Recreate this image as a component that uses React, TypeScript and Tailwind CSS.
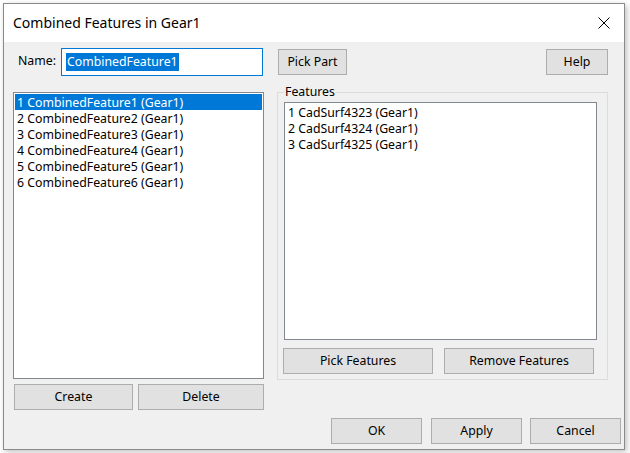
import React from 'react';

const listItems = [
  '1 CombinedFeature1 (Gear1)',
  '2 CombinedFeature2 (Gear1)',
  '3 CombinedFeature3 (Gear1)',
  '4 CombinedFeature4 (Gear1)',
  '5 CombinedFeature5 (Gear1)',
  '6 CombinedFeature6 (Gear1)',
];

const features = [
  '1 CadSurf4323 (Gear1)',
  '2 CadSurf4324 (Gear1)',
  '3 CadSurf4325 (Gear1)',
];

function WinButton({ label, className }: { label: string; className: string }) {
  return (
    <button
      type="button"
      className={ `flex items-center justify-center border border-[#adadad] bg-[#e1e1e1] text-[12.3px] text-black ${className}` }
    >
      {label}
    </button>
  );
}

export default function App() {
  return (
    <div className="min-h-screen bg-white p-[3px] font-['Noto_Sans',sans-serif] text-[12.3px] text-black">
      <div className="flex h-[447px] w-[622px] flex-col border border-[#8a8a8a] bg-[#f0f0f0] shadow-[2px_2px_6px_rgba(0,0,0,0.25)]">

        {/* title bar */}
        <div className="flex h-[38px] items-center bg-white">
          <span className="ml-[9px] text-[14px] leading-none">Combined Features in Gear1</span>
          <svg className="ml-auto mr-[14px]" width="12" height="12" viewBox="0 0 12 12">
            <path d="M0.5 0.5 L11.5 11.5 M11.5 0.5 L0.5 11.5" stroke="#000" strokeWidth="1" />
          </svg>
        </div>

        {/* name row */}
        <div className="flex items-start pt-[6px]">
          <span className="ml-[14px] mt-[5px] w-[43px] leading-[16px]">Name:</span>
          <div className="flex h-[28px] w-[202px] items-center border border-[#0078d7] bg-white pl-[4px]">
            <span className="bg-[#0078d7] px-[1px] leading-[18px] text-white">CombinedFeature1</span>
          </div>
          <WinButton label="Pick Part" className="ml-[15px] mt-[1px] h-[26px] w-[69px]" />
          <WinButton label="Help" className="ml-auto mr-[16px] mt-[1px] h-[26px] w-[62px]" />
        </div>

        {/* main area */}
        <div className="mt-[8px] flex items-start">
          <div className="ml-[9px] mt-[8px] flex w-[251px] flex-col">
            <div className="h-[287px] border border-[#828790] bg-white p-[1px]">
              {listItems.map((item, i) => (
                <div
                  key={ item }
                  className={ `h-[16px] px-[2px] leading-[17px] ${i === 0 ? 'bg-[#0078d7] text-white' : ''}` }
                >
                  {item}
                </div>
              ))}
            </div>
            <div className="ml-[1px] mt-[5px] flex gap-[5px]">
              <WinButton label="Create" className="h-[26px] w-[119px]" />
              <WinButton label="Delete" className="h-[26px] w-[126px]" />
            </div>
          </div>

          <fieldset className="ml-[13px] h-[296px] w-[331px] border border-[#dcdcdc]">
            <legend className="ml-[6px] px-[1px] leading-[16px]">Features</legend>
            <div className="ml-[6px] mt-[2px] h-[238px] w-[313px] border border-[#828790] bg-white p-[1px]">
              {features.map((item) => (
                <div key={ item } className="h-[16px] px-[2px] leading-[17px]">{item}</div>
              ))}
            </div>
            <div className="ml-[5px] mt-[8px] flex gap-[11px]">
              <WinButton label="Pick Features" className="h-[26px] w-[150px]" />
              <WinButton label="Remove Features" className="h-[26px] w-[150px]" />
            </div>
          </fieldset>
        </div>

        {/* dialog buttons */}
        <div className="mr-[3px] mt-[8px] flex justify-end">
          <WinButton label="OK" className="h-[26px] w-[91px]" />
          <WinButton label="Apply" className="ml-[9px] h-[26px] w-[91px]" />
          <WinButton label="Cancel" className="ml-[8px] h-[26px] w-[91px]" />
        </div>

      </div>
    </div>
  );
}
